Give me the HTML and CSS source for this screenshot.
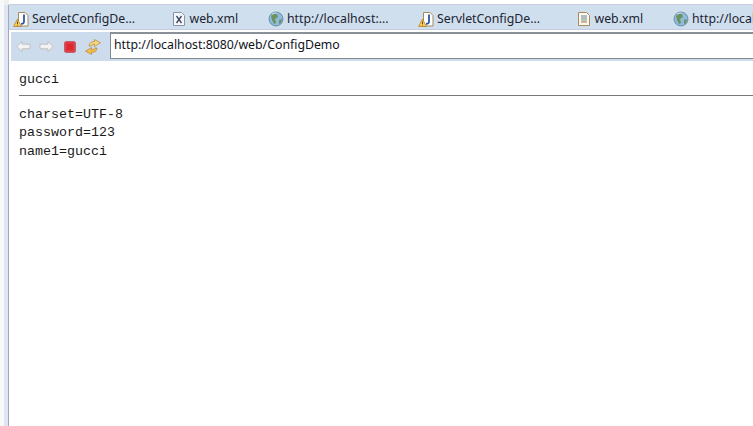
FILE: index.html
```html
<!DOCTYPE html>
<html lang="en">
<head>
<meta charset="utf-8">
<title>ConfigDemo</title>
<link rel="stylesheet" href="styles.css">
</head>
<body>
<div class="side"><div class="side-white"></div><div class="side-blue"></div></div>
<div class="window">
  <div class="tabs">
    <div class="tab tab-java">
      <svg class="ic" viewBox="0 0 16 16"><path d="M5.500 1.500h6.500l3 3v10.500h-9.500z" fill="#fff" stroke="#a58a5c"/><path d="M11 3.500v7q0 2.500-3 2.300" fill="none" stroke="#2f56a8" stroke-width="1.800"/><path d="M4.500 8L8.500 15.500H.5z" fill="#f6cc55" stroke="#a87b2a" stroke-width=".7"/><path d="M4.500 10.500v2.500M4.500 13.800v.8" stroke="#5a3a10" stroke-width=".9"/></svg>
      <span>ServletConfigDe...</span>
    </div>
    <div class="tab tab-x">
      <svg class="ic" viewBox="0 0 16 16"><path d="M2.500 1.500h8l3 3v10h-11z" fill="#f4f6fa" stroke="#8a94a8"/><path d="M5.500 5l5 7M10.500 5l-5 7" stroke="#3a4660" stroke-width="1.300"/></svg>
      <span>web.xml</span>
    </div>
    <div class="tab tab-globe">
      <svg class="ic" viewBox="0 0 16 16"><circle cx="8" cy="8" r="7" fill="#8dbbdc"/><path d="M3 5q3-3 6-2l1 3-3 2 1 4-2 1-2-4zM11 9l3-1-1 4-2 1z" fill="#6d9260"/><path d="M4 3q3-2 5-1" fill="none" stroke="#e4eef6" stroke-width="1.200"/><circle cx="8" cy="8" r="7" fill="none" stroke="#4f7590" stroke-width=".7"/></svg>
      <span>http://localhost:...</span>
    </div>
    <div class="tab tab-java">
      <svg class="ic" viewBox="0 0 16 16"><path d="M5.500 1.500h6.500l3 3v10.500h-9.500z" fill="#fff" stroke="#a58a5c"/><path d="M11 3.500v7q0 2.500-3 2.300" fill="none" stroke="#2f56a8" stroke-width="1.800"/><path d="M4.500 8L8.500 15.500H.5z" fill="#f6cc55" stroke="#a87b2a" stroke-width=".7"/><path d="M4.500 10.500v2.500M4.500 13.800v.8" stroke="#5a3a10" stroke-width=".9"/></svg>
      <span>ServletConfigDe...</span>
    </div>
    <div class="tab tab-x">
      <svg class="ic" viewBox="0 0 16 16"><path d="M2.500 1.500h8l3 3v10h-11z" fill="#fbf8ef" stroke="#a8895a"/><path d="M5 5h6M5 7h6" stroke="#6f7f9a"/><path d="M5 9h6" stroke="#5f9a6a"/><path d="M5 11h6" stroke="#b8694f"/></svg>
      <span>web.xml</span>
    </div>
    <div class="tab tab-globe">
      <svg class="ic" viewBox="0 0 16 16"><circle cx="8" cy="8" r="7" fill="#8dbbdc"/><path d="M3 5q3-3 6-2l1 3-3 2 1 4-2 1-2-4zM11 9l3-1-1 4-2 1z" fill="#6d9260"/><path d="M4 3q3-2 5-1" fill="none" stroke="#e4eef6" stroke-width="1.200"/><circle cx="8" cy="8" r="7" fill="none" stroke="#4f7590" stroke-width=".7"/></svg>
      <span>http://localhost:...</span>
    </div>
  </div>
  <div class="toolbar">
    <svg class="tool tool-nav" viewBox="0 0 16 14"><path d="M.8 7L6.500 1.500v3h8.500v5h-8.500v3z" fill="#f3f3f3" stroke="#bcbcbc"/></svg>
    <svg class="tool tool-nav" viewBox="0 0 16 14"><path d="M15.200 7L9.500 1.500v3H1v5h8.500v3z" fill="#f3f3f3" stroke="#bcbcbc"/></svg>
    <svg class="tool tool-stop" viewBox="0 0 12 12"><rect x=".5" y=".5" width="11" height="11" rx="1.800" fill="#e5404a" stroke="#b9606c"/><rect x="2.500" y="2.500" width="7" height="7" rx=".5" fill="#dc2a33"/></svg>
    <svg class="tool tool-sync" viewBox="0 0 16 16"><path d="M4 7Q4.500 2.500 9.500 2.500V0.500L15.500 3.800 9.500 7.500V5Q7 5 6.500 7z" fill="#f7d67c" stroke="#b3873c" stroke-width=".7"/><path d="M12 9Q11.500 13.500 6.500 13.500v2L.5 12.200 6.500 8.500V11Q9 11 9.500 9z" fill="#f3bf4a" stroke="#b3873c" stroke-width=".7"/></svg>
    <div class="url">http://localhost:8080/web/ConfigDemo</div>
  </div>
  <div class="content">
    <div class="name">gucci</div>
    <hr class="rule">
    <div class="params">
      <div>charset=UTF-8</div>
      <div>password=123</div>
      <div>name1=gucci</div>
    </div>
  </div>
</div>
</body>
</html>
```
FILE: styles.css
```css
html, body {
  margin: 0;
  padding: 0;
  height: 100%;
  overflow: hidden;
  background: #fff;
}
body {
  display: flex;
  width: 753px;
  height: 426px;
}
.side {
  display: flex;
  flex: none;
  width: 9px;
  background: #eef0f2;
}
.side-white { width: 4px; background: #f7f8f8; }
.side-blue {
  width: 5px;
  margin-top: 5px;
  background: #dfe5f4;
  border-right: 1px solid #a5a8b4;
  box-sizing: border-box;
}
.window {
  flex: 1;
  min-width: 0;
  display: flex;
  flex-direction: column;
  overflow: hidden;
  padding-top: 4px;
  background: #fff;
}
.tabs {
  display: flex;
  flex: none;
  align-items: center;
  box-sizing: border-box;
  height: 26px;
  padding: 3px 0 0 4px;
  background: #d0dfee;
  border-top: 1px solid #c9cede;
  border-bottom: 1px solid #c6cce0;
  white-space: nowrap;
  font: 12.3px/16px "Noto Sans", "Liberation Sans", sans-serif;
  color: #1c2433;
}
.tab { display: flex; flex: none; align-items: center; gap: 3px; }
.tab-java { width: 157.5px; }
.tab-x { width: 97.5px; }
.tab-globe { width: 150px; }
.ic { width: 16px; height: 16px; flex: none; }
.toolbar {
  display: flex;
  flex: none;
  align-items: center;
  box-sizing: border-box;
  height: 31px;
  margin-left: 2px;
  padding-left: 5px;
  background: #cddcec;
  border-top: 2px solid #fff;
}
.tool { flex: none; }
.tool-nav { width: 15px; height: 13px; margin-right: 8px; }
.tool-stop { width: 12px; height: 12px; margin: 0 10px 0 2px; }
.tool-sync { width: 16px; height: 16px; margin: 0 9px 0 -1px; }
.url {
  flex: 1;
  align-self: flex-start;
  height: 27px;
  box-sizing: border-box;
  padding-left: 3px;
  background: #fff;
  border-top: 2px solid #8a9098;
  border-bottom: 1px solid #808890;
  border-left: 1px solid #808890;
  font: 12.3px/22px "Noto Sans", "Liberation Sans", sans-serif;
  color: #10141c;
}
.content {
  flex: 1;
  padding: 10px 0 0 10px;
  font: 13.33px/18.5px "Liberation Mono", monospace;
  color: #1a1a1a;
}
.name { height: 18px; }
.rule {
  margin: 6px 0 9.5px;
  height: 1px;
  border: 0;
  background: #777;
}
```
